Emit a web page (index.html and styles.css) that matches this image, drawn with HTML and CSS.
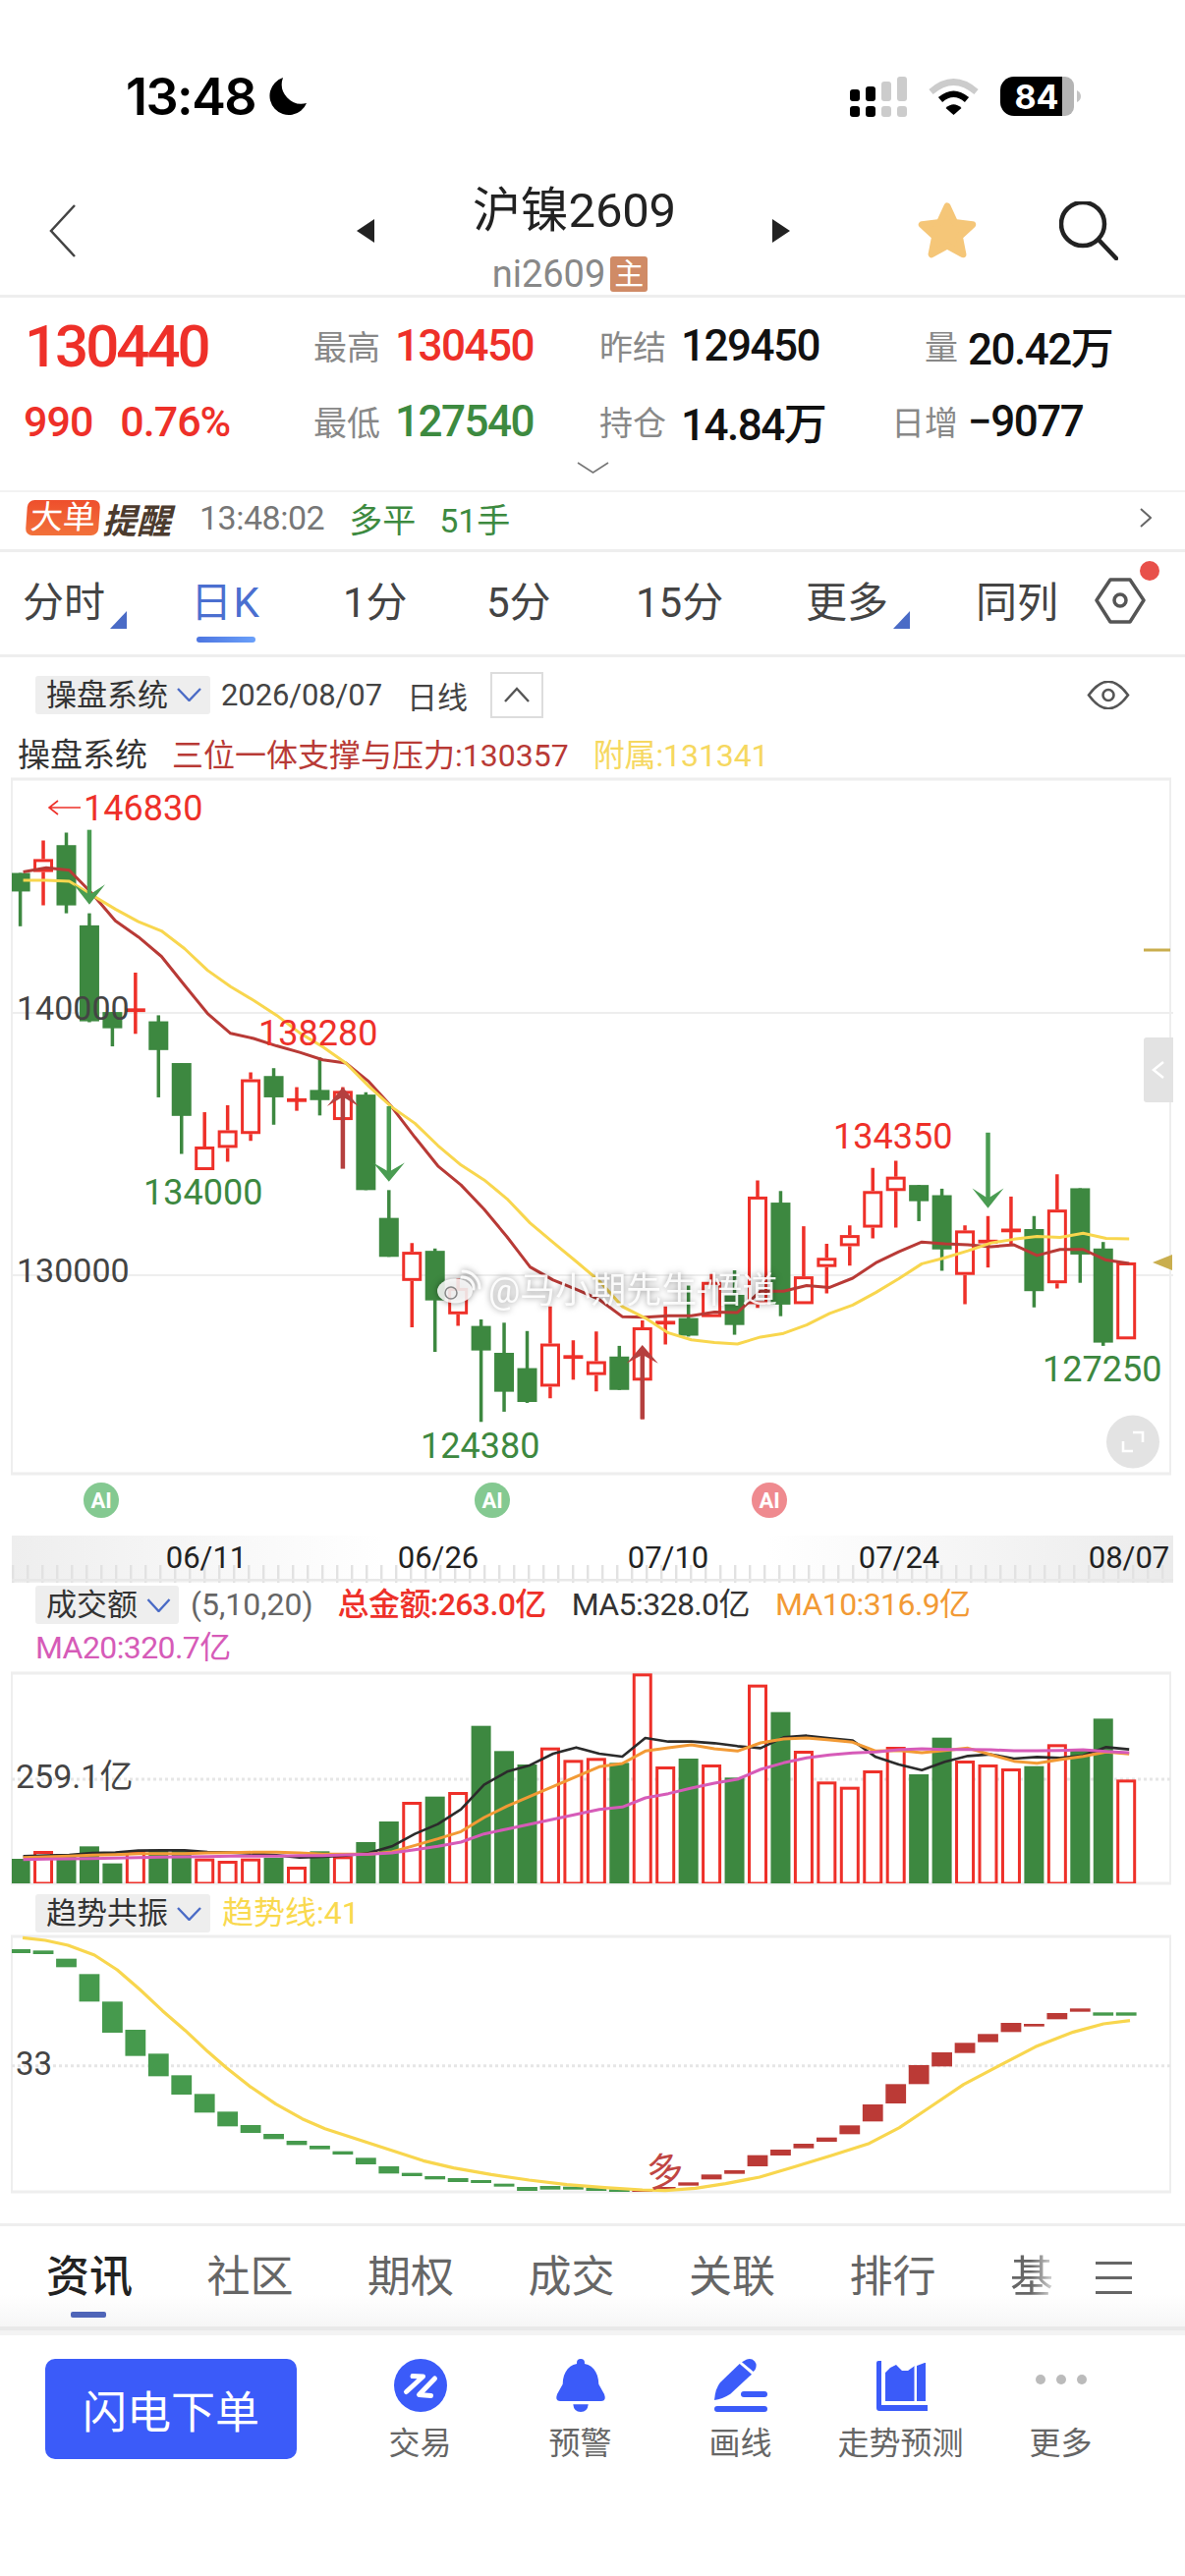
FILE: index.html
```html
<!DOCTYPE html>
<html lang="zh-CN">
<head>
  <meta charset="UTF-8" />
  <meta name="viewport" content="width=device-width, initial-scale=1.0" />
  <title>沪镍2609</title>
  <link rel="stylesheet" href="styles.css">
</head>
<body>
  <div class="status">
    <span class="clock">13:48</span>
    <svg class="moon" viewBox="0 0 40 40"><path d="M15 1A19.5 19.5 0 1 0 39 27 20 20 0 0 1 15 1Z"/></svg>
    <div class="status-right">
      <svg width="58" height="41" viewBox="0 0 58 41">
        <g fill="#000">
          <rect x="0" y="13" width="10" height="12" rx="3"/><rect x="0" y="30" width="10" height="11" rx="3"/>
          <rect x="16" y="10" width="10" height="15" rx="3"/><rect x="16" y="30" width="10" height="11" rx="3"/>
        </g>
        <g fill="#ccc">
          <rect x="32" y="5" width="10" height="20" rx="3"/><rect x="32" y="30" width="10" height="11" rx="3"/>
          <rect x="48" y="0" width="10" height="25" rx="3"/><rect x="48" y="30" width="10" height="11" rx="3"/>
        </g>
      </svg>
      <svg width="51" height="37" viewBox="0 0 51 37">
        <path d="M2.5 13.5Q25.5 -6.5 48.5 13.5" fill="none" stroke="#ccc" stroke-width="6.5"/>
        <path d="M12 21.5Q25.5 10 39 21.5" fill="none" stroke="#000" stroke-width="6.5"/>
        <path d="M17.5 30Q25.5 22.5 33.5 30L25.5 37Z" fill="#000"/>
      </svg>
      <svg width="82" height="40" viewBox="0 0 82 40">
        <path d="M14 0H63V40H14A14 14 0 0 1 0 26V14A14 14 0 0 1 14 0Z" fill="#000"/>
        <path d="M63 0H66A9 9 0 0 1 75 9V31A9 9 0 0 1 66 40H63Z" fill="#b4b4b4"/>
        <path d="M78 14Q82 16 82 20T78 26Z" fill="#c4c4c4"/>
        <text x="37" y="33" text-anchor="middle" class="battery-num">84</text>
      </svg>
    </div>
  </div>

  <div class="nav">
    <svg class="back" width="27" height="54" viewBox="0 0 27 54"><path d="M26 1L2 27 26 53" fill="none" stroke="#444" stroke-width="2.5"/></svg>
    <div class="tri tri-left"></div>
    <div class="title-box">
      <div class="title">沪镍2609</div>
      <div class="sub"><span>ni2609</span><span class="main-tag">主</span></div>
    </div>
    <div class="tri tri-right"></div>
    <svg class="star" width="60" height="60" viewBox="0 0 60 60"><path d="M30 5L37.6 21.5 55.7 23.7 42.4 36 45.9 53.8 30 45 14.1 53.8 17.6 36 4.3 23.7 22.4 21.5Z" fill="#f5c678" stroke="#f5c678" stroke-width="7" stroke-linejoin="round"/></svg>
    <svg class="search" width="60" height="60" viewBox="0 0 60 60"><circle cx="24" cy="23" r="22" fill="none" stroke="#222" stroke-width="4.5"/><path d="M41 40L58 58" stroke="#222" stroke-width="4.5" stroke-linecap="round"/></svg>
  </div>

  <div class="quote">
    <div class="price red">130440</div>
    <div class="label">最高</div><div class="val red">130450</div>
    <div class="label">昨结</div><div class="val">129450</div>
    <div class="label right">量</div><div class="val">20.42万</div>
    <div class="change red"><span>990</span><span>0.76%</span></div>
    <div class="label">最低</div><div class="val green">127540</div>
    <div class="label">持仓</div><div class="val">14.84万</div>
    <div class="label right">日增</div><div class="val">−9077</div>
    <svg class="more-down" width="33" height="12" viewBox="0 0 33 12"><path d="M1 1L16.5 11 32 1" fill="none" stroke="#777" stroke-width="1.6"/></svg>
  </div>

  <div class="alert">
    <span class="badge">大单</span><span class="badge-word">提醒</span>
    <span class="alert-time">13:48:02</span>
    <span class="green">多平</span>
    <span class="green alert-lots">51手</span>
    <svg class="alert-go" width="12" height="20" viewBox="0 0 12 20"><path d="M1 1L11 10 1 19" fill="none" stroke="#666" stroke-width="2"/></svg>
  </div>

  <div class="periods">
    <div class="period has-more">分时</div>
    <div class="period active">日K</div>
    <div class="period">1分</div>
    <div class="period">5分</div>
    <div class="period">15分</div>
    <div class="period has-more">更多</div>
    <div class="period">同列</div>
    <svg class="hex" width="68" height="65" viewBox="0 0 68 65">
      <path d="M2 40L16 19H36L50 40 36 62H16Z" fill="none" stroke="#555" stroke-width="3.5" stroke-linejoin="round"/>
      <circle cx="26" cy="40" r="6" fill="none" stroke="#555" stroke-width="3.5"/>
      <circle cx="56" cy="10" r="10" fill="#e8504a"/>
    </svg>
  </div>

  <div class="toolbar">
    <div class="select"><span>操盘系统</span><svg width="27" height="14" viewBox="0 0 27 14"><path d="M2 1L13.5 13 25 1" fill="none" stroke="#4a6bc6" stroke-width="2.4"/></svg></div>
    <span class="tool-date">2026/08/07</span>
    <span class="tool-line">日线</span>
    <div class="collapse"><svg width="28" height="16" viewBox="0 0 28 16"><path d="M2 15L14 2 26 15" fill="none" stroke="#555" stroke-width="2.4"/></svg></div>
    <svg class="eye" width="44" height="29" viewBox="0 0 44 29"><path d="M2 14.5Q22 -13 42 14.5 22 42 2 14.5Z" fill="none" stroke="#555" stroke-width="2.6"/><circle cx="22" cy="14.5" r="5.5" fill="none" stroke="#555" stroke-width="2.6"/></svg>
  </div>

  <div class="indicator">
    <span class="ind-name">操盘系统</span>
    <span class="ind-line">三位一体支撑与压力:130357</span>
    <span class="ind-sub">附属:131341</span>
  </div>

  <svg id="mainChart" class="chart" width="1206" height="822" viewBox="0 790 1206 822"></svg>

  <div class="vol-head">
    <div class="select"><span>成交额</span><svg width="25" height="14" viewBox="0 0 25 14"><path d="M1.5 1L12.5 13 23.5 1" fill="none" stroke="#4a6bc6" stroke-width="2.4"/></svg></div>
    <span class="vol-args">(5,10,20)</span>
    <span class="vol-total">总金额:263.0亿</span>
    <span class="vol-ma5">MA5:328.0亿</span>
    <span class="vol-ma10">MA10:316.9亿</span>
    <span class="vol-ma20">MA20:320.7亿</span>
  </div>

  <svg id="volChart" class="chart" width="1206" height="218" viewBox="0 1702 1206 218"></svg>

  <div class="trend-head">
    <div class="select"><span>趋势共振</span><svg width="27" height="14" viewBox="0 0 27 14"><path d="M2 1L13.5 13 25 1" fill="none" stroke="#4a6bc6" stroke-width="2.4"/></svg></div>
    <span class="trend-val">趋势线:41</span>
  </div>

  <svg id="trendChart" class="chart" width="1206" height="264" viewBox="0 1970 1206 264"></svg>

  <div class="tabs">
    <div class="tab active">资讯</div>
    <div class="tab">社区</div>
    <div class="tab">期权</div>
    <div class="tab">成交</div>
    <div class="tab">关联</div>
    <div class="tab">排行</div>
    <div class="tab fade">基</div>
    <div class="tab-menu"><i></i><i></i><i></i></div>
  </div>

  <div class="actions">
    <button class="order">闪电下单</button>
    <div class="action">
      <svg width="54" height="54" viewBox="0 0 54 54"><circle cx="27" cy="27" r="27" fill="#3b5bf9"/><path d="M19 17.5L29.5 18 12.5 33.5M41.5 20L25.5 36.5 37.5 37.5" fill="none" stroke="#fff" stroke-width="5" stroke-linecap="round" stroke-linejoin="round"/></svg>
      <span>交易</span>
    </div>
    <div class="action">
      <svg width="54" height="54" viewBox="0 0 54 54"><circle cx="27" cy="4" r="4" fill="#3b5bf9"/><path d="M8.7 25.7C8.7 13 16 4.5 27 4.5S45.3 13 45.3 25.7L51 36Q53.5 43 48 43H6Q.5 43 3 36Z" fill="#3b5bf9"/><path d="M19.3 46.3H34.7Q34 54 27 54T19.3 46.3Z" fill="#3b5bf9"/></svg>
      <span>预警</span>
    </div>
    <div class="action">
      <svg width="54" height="54" viewBox="0 0 54 54"><path d="M25.7 5L38 15.7 16.3 35.7Q8 41 0 42 1 30 6 24Z" fill="#3b5bf9"/><path d="M28 3.3L33 .5Q38 -1 41 2.5T41.5 11L39.7 13Z" fill="#3b5bf9"/><rect x="27" y="33" width="27" height="6" rx="3" fill="#3b5bf9"/><rect x="0" y="48" width="54" height="6" rx="3" fill="#3b5bf9"/></svg>
      <span>画线</span>
    </div>
    <div class="action">
      <svg width="54" height="54" viewBox="0 0 54 54"><path d="M2 4Q2 2 4 2H7V47H53Q56 47 56 49V50Q56 53 53 53H5Q2 53 2 50Z" fill="#3b5bf9"/><path d="M11 14L16 9 22 6 28 12 34 12 41 7V43H11Z" fill="#3b5bf9"/><path d="M43 7L51 4H52V43H43Z" fill="#3b5bf9"/><path d="M41.5 6V43" stroke="#fff" stroke-width="2"/></svg>
      <span>走势预测</span>
    </div>
    <div class="action">
      <svg width="54" height="54" viewBox="0 0 54 54"><circle cx="6" cy="21" r="5" fill="#bbb"/><circle cx="27" cy="21" r="5" fill="#bbb"/><circle cx="48" cy="21" r="5" fill="#bbb"/></svg>
      <span>更多</span>
    </div>
  </div>

  <script src="chart.js"></script>
</body>
</html>
```

FILE: styles.css
```css
* {
  box-sizing: border-box;
  margin: 0;
  padding: 0;
}

body {
  width: 1206px;
  font-family: Roboto, "Noto Sans CJK SC", sans-serif;
  background: #fff;
  color: #222;
  overflow-x: hidden;
}

.red { color: #ee3029; }
.green { color: #3d8a40; }

/* status bar */
.status {
  height: 170px;
  padding: 26px 106px 0 128px;
  display: flex;
  align-items: center;
}

.clock {
  font-family: Inter, sans-serif;
  font-size: 52px;
  font-weight: 600;
  letter-spacing: -1.5px;
  color: #000;
}

.moon {
  width: 40px;
  height: 40px;
  margin-left: 13px;
  fill: #000;
}

.status-right {
  margin-left: auto;
  display: flex;
  align-items: center;
  gap: 22px;
}

.battery-num {
  font-family: Inter, sans-serif;
  font-size: 34px;
  font-weight: 700;
  fill: #fff;
}

/* title bar */
.nav {
  height: 133px;
  padding-left: 50px;
  display: flex;
  align-items: center;
  border-bottom: 3px solid #eee;
}

.tri {
  width: 18px;
  height: 24px;
  background: #222;
}

.tri-left {
  margin-left: 286px;
  clip-path: polygon(100% 0, 100% 100%, 0 50%);
}

.tri-right {
  margin-left: 101px;
  clip-path: polygon(0 0, 100% 50%, 0 100%);
}

.title-box {
  margin-left: 100px;
  width: 204px;
  align-self: flex-start;
  padding-top: 17px;
  text-align: center;
}

.title {
  font-size: 49px;
  line-height: 56px;
  white-space: nowrap;
  letter-spacing: -0.2px;
  color: #222;
}

.sub {
  margin-top: 17px;
  height: 38px;
  padding-right: 6px;
  display: flex;
  justify-content: center;
  align-items: center;
  gap: 5px;
  font-size: 38px;
  color: #888;
}

.main-tag {
  width: 38px;
  height: 36px;
  line-height: 36px;
  background: #d08b66;
  color: #fff;
  font-size: 30px;
  border-radius: 3px;
}

.star { margin-left: 130px; }
.search { margin-left: 84px; }

/* quote block */
.quote {
  position: relative;
  height: 198px;
  display: grid;
  grid-template-columns: 319px 83px 208px 83px 214px 78px 1fr;
  grid-template-rows: 77px 77px;
  padding-top: 10px;
  align-items: center;
  border-bottom: 2px solid #f2f2f2;
}

.price {
  padding-left: 25px;
  font-size: 60px;
  font-weight: 500;
  letter-spacing: -3px;
  line-height: 60px;
  margin-top: 2px;
}

.change {
  padding-left: 24px;
  display: flex;
  gap: 28px;
  font-size: 43px;
  font-weight: 500;
  letter-spacing: -1px;
}

.label {
  font-size: 34px;
  color: #888;
}

.label.right {
  text-align: right;
  padding-right: 10px;
}

.val {
  font-size: 44px;
  font-weight: 500;
  letter-spacing: -1.5px;
  white-space: nowrap;
  color: #111;
}

.val.red { color: #ee3029; }
.val.green { color: #3d8a40; }

.more-down {
  position: absolute;
  left: 587px;
  top: 167px;
}

/* big order alert */
.alert {
  height: 61px;
  padding: 0 34px 6px 27px;
  display: flex;
  align-items: center;
  font-size: 34px;
  border-bottom: 3px solid #eee;
}

.badge {
  width: 74px;
  height: 36px;
  line-height: 36px;
  text-align: center;
  font-size: 33px;
  color: #fff;
  background: linear-gradient(#ee4f2c, #f2713a);
  border-radius: 7px;
  transform: skewX(-4deg);
}

.badge-word {
  margin-left: 3px;
  font-size: 35px;
  font-weight: 700;
  font-style: italic;
  color: #4c3b2e;
}

.alert-time {
  margin-left: 29px;
  margin-right: 25px;
  color: #777;
  letter-spacing: -0.5px;
}

.alert-lots { margin-left: 24px; }
.alert-go { margin-left: auto; }

/* period tabs */
.periods {
  height: 107px;
  padding-left: 23px;
  display: grid;
  grid-template-columns: 171px 155px 146px 152px 173px 173px 121px 68px;
  align-items: center;
  border-bottom: 3px solid #eee;
}

.period {
  position: relative;
  height: 50px;
  line-height: 50px;
  font-size: 42px;
  color: #444;
  white-space: nowrap;
}

.period.active {
  color: #4b6fd0;
  letter-spacing: 1.5px;
}

.period.active::after {
  content: "";
  position: absolute;
  left: 6px;
  top: 59px;
  width: 60px;
  height: 6px;
  border-radius: 3px;
  background: linear-gradient(90deg, #4d75e0, #6aa0fa);
}

.period.has-more::after {
  content: "";
  position: absolute;
  left: 89px;
  top: 33px;
  width: 17px;
  height: 18px;
  background: #4a6bc6;
  clip-path: polygon(100% 0, 100% 100%, 0 100%);
}

.hex { margin-top: -22px; }

/* indicator selector */
.toolbar {
  height: 76px;
  padding: 0 56px 0 36px;
  display: flex;
  align-items: center;
  font-size: 31px;
  color: #444;
}

.select {
  height: 39px;
  padding: 0 8px 0 11px;
  display: inline-flex;
  align-items: center;
  gap: 8px;
  font-size: 31px;
  line-height: 39px;
  color: #333;
  background: #eee;
  border-radius: 3px;
}

.tool-date {
  margin-left: 11px;
  letter-spacing: -0.1px;
}

.tool-line { margin-left: 25px; }

.collapse {
  margin-left: 23px;
  width: 54px;
  height: 47px;
  display: flex;
  align-items: center;
  justify-content: center;
  border: 2px solid #ddd;
}

.eye { margin-left: auto; }

.indicator {
  height: 45px;
  padding: 0 0 4px 18px;
  display: flex;
  align-items: center;
  font-size: 32px;
  white-space: nowrap;
}

.ind-name {
  font-size: 33px;
  color: #333;
}

.ind-line {
  margin-left: 25px;
  color: #b83a36;
}

.ind-sub {
  margin-left: 25px;
  letter-spacing: -0.1px;
  color: #f6d860;
}

/* charts */
.chart {
  display: block;
  overflow: visible;
}

.chart text {
  font-family: Roboto, "Noto Sans CJK SC", sans-serif;
}

.tag-text { font-size: 36px; }

.axis-label {
  font-size: 34px;
  letter-spacing: 0;
}

.axis-text {
  font-size: 31px;
  fill: #222;
}

.ai-text {
  font-size: 22px;
  font-weight: 700;
  fill: #fff;
}

.watermark {
  font-size: 36px;
  fill: rgba(255, 255, 255, 0.9);
}

.wm-shadow {
  filter: drop-shadow(0 0 3px rgba(0, 0, 0, 0.5));
}

.vol-head {
  height: 90px;
  padding: 2px 0 0 36px;
  display: flex;
  flex-wrap: wrap;
  align-items: center;
  align-content: flex-start;
  font-size: 32px;
  line-height: 39px;
  letter-spacing: -0.6px;
  white-space: nowrap;
}

.vol-head .select {
  gap: 9px;
  letter-spacing: 0;
}

.vol-args {
  margin-left: 12px;
  letter-spacing: 0;
  color: #666;
}

.vol-total {
  margin-left: 25px;
  font-weight: 500;
  color: #ee3029;
}

.vol-ma5 { margin-left: 26px; color: #333; }
.vol-ma10 { margin-left: 26px; color: #f29a35; }

.vol-ma20 {
  width: 100%;
  margin-top: 5px;
  color: #d65bb8;
}

.trend-head {
  height: 50px;
  padding: 8px 0 3px 36px;
  display: flex;
  align-items: center;
  font-size: 32px;
  line-height: 39px;
}

.trend-val {
  margin-left: 12px;
  color: #f9d94f;
}

/* bottom tabs */
.tabs {
  margin-top: 29px;
  height: 109px;
  padding: 27px 54px 0 47px;
  display: flex;
  gap: 77.5px;
  align-items: flex-start;
  border-top: 3px solid #eee;
  border-bottom: 4px solid #e9e9e9;
  background: linear-gradient(#fff 68%, #f6f6f6);
}

.tab {
  position: relative;
  width: 86px;
  height: 50px;
  line-height: 50px;
  font-size: 44px;
  color: #666;
  white-space: nowrap;
}

.tab.active {
  font-weight: 500;
  color: #222;
}

.tab.active::after {
  content: "";
  position: absolute;
  left: 25px;
  top: 60px;
  width: 36px;
  height: 6px;
  border-radius: 2px;
  background: #4f65b8;
}

.tab.fade {
  width: 53px;
  -webkit-mask-image: linear-gradient(90deg, #000 40%, transparent);
  mask-image: linear-gradient(90deg, #000 40%, transparent);
}

.tab-menu {
  width: 37px;
  padding-top: 9px;
  margin-left: -42.5px;
}

.tab-menu i {
  display: block;
  height: 3px;
  background: #666;
  margin-bottom: 12px;
}

/* bottom actions */
.actions {
  padding: 24px 0 0 46px;
  display: flex;
  align-items: flex-start;
  border-top: 5px solid #f3f3f3;
}

.order {
  width: 256px;
  height: 102px;
  margin-right: 44px;
  border: none;
  border-radius: 10px;
  background: #3b5bf9;
  color: #fff;
  font-family: Roboto, "Noto Sans CJK SC", sans-serif;
  font-size: 45px;
}

.action {
  width: 163px;
  display: flex;
  flex-direction: column;
  align-items: center;
  gap: 6px;
  font-size: 32px;
  color: #666;
}
```

FILE: chart.js
```js
// Candle, line and bar values below were measured off a scaled trace of the
// chart, so each chart has its own helper back to page pixels.
const NS = 'http://www.w3.org/2000/svg';
const RED = '#ee3029';
const GREEN = '#3d8840';

const barX = i => 20.6 + i * 23.45;
const priceY = v => 780 + v / 2.119;
const volY = v => 1520 + v / 3;
const trendY = v => 1920 + v / 3;

function add(svg, tag, attrs, text) {
  const el = document.createElementNS(NS, tag);
  for (const k in attrs) el.setAttribute(k, attrs[k]);
  if (text) el.textContent = text;
  svg.appendChild(el);
  return el;
}

function frame(svg, top, bottom) {
  add(svg, 'path', { d: `M12 ${top}V${bottom}M1191 ${top}V${bottom}`, stroke: '#eee', 'stroke-width': 2 });
  add(svg, 'path', { d: `M11 ${top}H1192M11 ${bottom}H1192`, stroke: '#eee', 'stroke-width': 3 });
}

function clip(svg, id, top, bottom) {
  const defs = add(svg, 'defs', {});
  const c = add(defs, 'clipPath', { id });
  add(c, 'rect', { x: 12, y: top, width: 1179, height: bottom - top });
  return add(svg, 'g', { 'clip-path': `url(#${id})` });
}

function line(svg, values, toY, color, width) {
  const pts = values.map((v, i) => `${barX(i) + 3},${toY(v)}`).join(' ');
  add(svg, 'polyline', { points: pts, fill: 'none', stroke: color, 'stroke-width': width, 'stroke-linejoin': 'round' });
}

function drawMain() {
  const svg = document.getElementById('mainChart');
  frame(svg, 793, 1500);
  add(svg, 'path', { d: 'M12 1031H1194M12 1298H1194', stroke: '#eee', 'stroke-width': 2 });

  // [up?, high, body top, body bottom, low]
  const candles = [
    [0, 230, 230, 270, 345], [1, 160, 200, 228, 300], [0, 143, 170, 300, 317], [0, 317, 343, 550, 552],
    [0, 530, 530, 565, 604], [1, 445, 522, 530, 577], [0, 537, 550, 612, 714], [0, 640, 640, 754, 836],
    [1, 746, 820, 871, 871], [1, 731, 785, 823, 853], [1, 660, 675, 793, 808], [0, 651, 668, 714, 773],
    [1, 692, 716, 724, 743], [0, 628, 698, 720, 753], [1, 692, 700, 763, 763], [0, 703, 708, 914, 914],
    [0, 914, 974, 1058, 1058], [1, 1028, 1047, 1110, 1210], [0, 1040, 1045, 1152, 1263], [1, 1105, 1125, 1182, 1207],
    [0, 1193, 1207, 1260, 1414], [0, 1200, 1265, 1349, 1392], [0, 1218, 1298, 1371, 1373], [1, 1165, 1245, 1338, 1363],
    [1, 1238, 1270, 1278, 1323], [1, 1219, 1283, 1313, 1348], [0, 1250, 1273, 1345, 1345], [1, 1195, 1210, 1325, 1408],
    [1, 1165, 1196, 1204, 1247], [0, 1120, 1190, 1228, 1230], [1, 1095, 1112, 1188, 1188], [0, 1087, 1140, 1205, 1226],
    [1, 893, 928, 1160, 1168], [0, 916, 941, 1161, 1186], [1, 992, 1100, 1160, 1160], [1, 1030, 1060, 1080, 1137],
    [1, 990, 1011, 1035, 1077], [1, 866, 916, 995, 1018], [1, 851, 885, 916, 995], [0, 903, 903, 938, 981],
    [0, 911, 925, 1042, 1088], [1, 990, 1001, 1097, 1160], [1, 970, 1021, 1029, 1081], [1, 928, 997, 1005, 1030],
    [0, 970, 998, 1132, 1167], [1, 880, 956, 1115, 1126], [0, 910, 910, 1053, 1114], [0, 1026, 1040, 1243, 1250],
    [1, 1070, 1070, 1236, 1236],
  ];
  const red = [228, 219, 224, 275, 333, 368, 410, 472, 533, 576, 587, 603, 617, 633, 640, 680, 735, 800, 862, 903, 955, 1015, 1080, 1108, 1128, 1150, 1187, 1188, 1185, 1185, 1177, 1178, 1132, 1132, 1120, 1124, 1104, 1071, 1047, 1026, 1030, 1032, 1036, 1032, 1055, 1042, 1042, 1065, 1072];
  const yellow = [246, 246, 248, 278, 308, 335, 355, 393, 440, 475, 505, 537, 575, 605, 640, 690, 735, 770, 818, 860, 892, 933, 985, 1027, 1068, 1110, 1165, 1190, 1222, 1237, 1243, 1246, 1231, 1223, 1205, 1180, 1162, 1135, 1105, 1073, 1060, 1045, 1028, 1020, 1014, 1016, 1007, 1018, 1019];

  const g = clip(svg, 'mainClip', 793, 1500);
  candles.forEach((c, i) => {
    const x = barX(i);
    const [up, hi, top, bot, lo] = c.map((v, n) => (n ? priceY(v) : v));
    const color = up ? RED : GREEN;
    if (!up || bot - top < 6) {
      add(g, 'path', { d: `M${x} ${hi}V${lo}`, stroke: color, 'stroke-width': 3.5 });
      add(g, 'rect', { x: x - 10, y: top, width: 20, height: bot - top, fill: color });
    } else {
      add(g, 'path', { d: `M${x} ${hi}V${top}M${x} ${bot}V${lo}`, stroke: color, 'stroke-width': 3.5 });
      add(g, 'rect', { x: x - 8.5, y: top + 1.5, width: 17, height: bot - top - 3, fill: '#fff', stroke: color, 'stroke-width': 3 });
    }
  });
  line(g, red, priceY, '#b83a36', 3);
  line(g, yellow, priceY, '#f8d64e', 3);

  // buy and sell arrows
  const downs = [[3, 137, 298, 255], [16, 733, 896, 855], [42, 790, 953, 910]];
  downs.forEach(([i, from, tip, wing]) => {
    const x = barX(i);
    const t = priceY(tip), w = priceY(wing);
    add(svg, 'path', { d: `M${x} ${priceY(from)}V${t - 6}`, stroke: '#4a9c52', 'stroke-width': 4.5 });
    add(svg, 'path', { d: `M${x} ${t}L${x - 16} ${w}L${x} ${t - 10}L${x + 16} ${w}Z`, fill: '#4a9c52' });
  });
  const ups = [[14, 868, 692, 733], [27, 1408, 1248, 1288]];
  ups.forEach(([i, from, tip, wing]) => {
    const x = barX(i);
    const t = priceY(tip), w = priceY(wing);
    add(svg, 'path', { d: `M${x} ${priceY(from)}V${t + 6}`, stroke: '#b5403f', 'stroke-width': 4.5 });
    add(svg, 'path', { d: `M${x} ${t}L${x - 16} ${w}L${x} ${t + 10}L${x + 16} ${w}Z`, fill: '#b5403f' });
  });

  // price labels
  const labels = [
    ['146830', 85, 835, RED], ['138280', 263, 1064, RED], ['134000', 146, 1226, GREEN],
    ['124380', 428, 1484, GREEN], ['134350', 848, 1169, RED], ['127250', 1061, 1406, GREEN],
  ];
  labels.forEach(([t, x, y, color]) => add(svg, 'text', { x, y, fill: color, class: 'tag-text' }, t));
  add(svg, 'text', { x: 17, y: 1038, fill: '#444', class: 'axis-label' }, '140000');
  add(svg, 'text', { x: 17, y: 1305, fill: '#444', class: 'axis-label' }, '130000');
  add(svg, 'path', { d: 'M82 822H50M59 815L50 822 59 829', fill: 'none', stroke: RED, 'stroke-width': 1.6 });

  // side markers
  add(svg, 'rect', { x: 1164, y: 965.5, width: 27, height: 3, fill: '#c9ae4e' });
  add(svg, 'path', { d: 'M1173 1285L1193 1277V1293Z', fill: '#c9ae4e' });
  add(svg, 'path', { d: 'M1194 1056H1167Q1164 1056 1164 1059V1119Q1164 1122 1167 1122H1194Z', fill: '#e3e3e3' });
  add(svg, 'path', { d: 'M1184 1081L1174 1089 1184 1097', fill: 'none', stroke: '#fff', 'stroke-width': 2.5 });
  add(svg, 'ellipse', { cx: 1153, cy: 1467.5, rx: 27, ry: 27, fill: '#e3e3e3' });
  add(svg, 'path', { d: 'M1143 1467V1477H1153M1163 1468V1458H1153', fill: 'none', stroke: '#fff', 'stroke-width': 2.6 });

  // weibo watermark
  const wm = add(svg, 'g', { class: 'wm-shadow' });
  add(wm, 'ellipse', { cx: 463, cy: 1314, rx: 18, ry: 12.5, fill: 'rgba(255,255,255,.85)' });
  add(wm, 'circle', { cx: 459, cy: 1316, r: 6, fill: 'none', stroke: '#888', 'stroke-width': 1.5 });
  add(wm, 'path', { d: 'M470 1300A11 11 0 0 1 482 1312M471 1294A17 17 0 0 1 488 1311', fill: 'none', stroke: 'rgba(255,255,255,.9)', 'stroke-width': 3, 'stroke-linecap': 'round' });
  add(wm, 'text', { x: 497, y: 1326, class: 'watermark' }, '@马小期先生-悟道');

  // AI marks
  [[103, '#84c991'], [501, '#84c991'], [783, '#ef8a8f']].forEach(([x, color]) => {
    add(svg, 'circle', { cx: x, cy: 1527, r: 18, fill: color });
    add(svg, 'text', { x, y: 1535, 'text-anchor': 'middle', class: 'ai-text' }, 'AI');
  });

  // date axis
  const defs = add(svg, 'defs', {});
  const grad = add(defs, 'linearGradient', { id: 'axisFill' });
  [[0, '#eee'], [0.32, '#fff'], [0.65, '#fff'], [1, '#ebebeb']].forEach(([o, c]) =>
    add(grad, 'stop', { offset: o, 'stop-color': c }));
  add(svg, 'rect', { x: 12, y: 1563, width: 1182, height: 48, fill: 'url(#axisFill)' });
  for (let x = 12; x < 1194; x += 15) {
    add(svg, 'rect', { x, y: 1593, width: 2.4, height: 18, fill: '#e2e2e2' });
  }
  add(svg, 'rect', { x: 12, y: 1607, width: 1182, height: 2.5, fill: '#e8e8e8' });
  [['06/11', 210], ['06/26', 446], ['07/10', 680], ['07/24', 915], ['08/07', 1149]].forEach(([t, x]) =>
    add(svg, 'text', { x, y: 1596, 'text-anchor': 'middle', class: 'axis-text' }, t));
}

function drawVolume() {
  const svg = document.getElementById('volChart');
  frame(svg, 1703, 1917);
  add(svg, 'path', { d: 'M12 1811H1191', stroke: '#e6e6e6', 'stroke-width': 3, 'stroke-dasharray': '3 3' });

  const tops = [1116, 1092, 1105, 1078, 1130, 1092, 1088, 1090, 1115, 1122, 1115, 1113, 1140, 1093, 1108, 1065, 1002, 942, 926, 912, 710, 787, 828, 776, 814, 808, 823, 550, 834, 810, 828, 868, 584, 668, 786, 880, 896, 846, 774, 858, 746, 816, 828, 840, 833, 766, 785, 688, 874];
  const ups = [0, 1, 0, 0, 0, 1, 0, 0, 1, 1, 1, 0, 1, 0, 1, 0, 0, 1, 0, 1, 0, 0, 0, 1, 1, 1, 0, 1, 1, 0, 1, 0, 1, 0, 1, 1, 1, 1, 1, 0, 0, 1, 1, 1, 0, 1, 0, 0, 1];
  const ma5 = [1108, 1106, 1104, 1098, 1097, 1091, 1090, 1090, 1095, 1097, 1100, 1105, 1112, 1110, 1106, 1098, 1078, 1040, 1010, 965, 890, 850, 830, 795, 776, 795, 804, 747, 758, 758, 763, 772, 778, 745, 740, 748, 755, 805, 828, 845, 820, 802, 797, 810, 805, 808, 800, 775, 782];
  const ma10 = [1112, 1110, 1108, 1105, 1103, 1100, 1100, 1100, 1098, 1097, 1096, 1096, 1098, 1102, 1102, 1102, 1095, 1075, 1055, 1033, 990, 955, 925, 895, 865, 835, 825, 787, 777, 768, 780, 787, 762, 750, 747, 753, 760, 787, 785, 792, 785, 778, 798, 818, 824, 813, 803, 790, 796];
  const ma20 = [1118, 1117, 1116, 1115, 1114, 1112, 1111, 1110, 1109, 1108, 1108, 1108, 1106, 1106, 1104, 1102, 1098, 1088, 1078, 1065, 1040, 1025, 1010, 995, 980, 965, 958, 930, 917, 900, 885, 873, 843, 823, 808, 799, 793, 790, 783, 780, 782, 782, 783, 786, 786, 785, 783, 788, 792];

  const g = clip(svg, 'volClip', 1703, 1917);
  const bottom = volY(1191);
  tops.forEach((v, i) => {
    const x = barX(i), y = volY(v);
    if (ups[i]) {
      add(g, 'rect', { x: x - 8.5, y: y + 1.5, width: 17, height: bottom - y - 1.5, fill: '#fff', stroke: RED, 'stroke-width': 3 });
    } else {
      add(g, 'rect', { x: x - 10, y, width: 20, height: bottom - y, fill: GREEN });
    }
  });
  line(g, ma5, volY, '#2b2b2b', 2.6);
  line(g, ma10, volY, '#f29a35', 3);
  line(g, ma20, volY, '#d65bb8', 3);
  add(svg, 'text', { x: 16, y: 1820, 'font-size': 34, fill: '#444' }, '259.1亿');
}

function drawTrend() {
  const svg = document.getElementById('trendChart');
  frame(svg, 1971, 2231);
  add(svg, 'path', { d: 'M12 2102.7H1191', stroke: '#e6e6e6', 'stroke-width': 3, 'stroke-dasharray': '3 3' });

  // [body top, body bottom]; green until index 26, then red, last two green
  const bars = [[192, 204], [196, 207], [221, 247], [268, 352], [352, 447], [438, 518], [511, 580], [577, 636], [634, 691], [688, 733], [729, 753], [756, 772], [777, 790], [792, 803], [809, 819], [829, 849], [855, 877], [875, 885], [885, 895], [891, 903], [897, 906], [908, 917], [918, 930], [915, 926], [917, 926], [920, 930], [925, 935], [928, 935], [918, 925], [904, 914], [880, 895], [867, 878], [821, 855], [804, 822], [786, 800], [767, 780], [730, 757], [666, 718], [604, 663], [546, 604], [507, 550], [478, 509], [451, 476], [417, 445], [420, 428], [387, 406], [373, 383], [385, 395], [385, 395]];
  const g = clip(svg, 'trendClip', 1971, 2231);
  bars.forEach(([t, b], i) => {
    const color = i > 26 && i < 47 ? '#bb3a36' : '#469a4d';
    add(g, 'rect', { x: barX(i) - 10.4, y: trendY(t), width: 20.8, height: (b - t) / 3, fill: color });
  });

  const curve = [[30, 157], [60, 165], [90, 180], [125, 210], [155, 255], [185, 315], [215, 380], [245, 440], [275, 505], [300, 555], [330, 610], [365, 665], [400, 710], [430, 740], [470, 770], [510, 800], [560, 838], [600, 860], [650, 880], [700, 897], [750, 911], [800, 920], [850, 927], [880, 929], [920, 922], [960, 908], [1005, 888], [1050, 857], [1100, 822], [1150, 785], [1190, 737], [1230, 675], [1275, 605], [1320, 550], [1370, 490], [1420, 445], [1460, 420], [1495, 410]];
  add(svg, 'polyline', { points: curve.map(([x, y]) => `${x / 1.3},${trendY(y)}`).join(' '), fill: 'none', stroke: '#f8d64e', 'stroke-width': 3.2, 'stroke-linejoin': 'round' });

  add(svg, 'text', { x: 658, y: 2223, 'font-size': 38, fill: '#c04643', transform: 'rotate(-12 677 2210)' }, '多');
  add(svg, 'text', { x: 16, y: 2112, 'font-size': 33, fill: '#444' }, '33');
}

drawMain();
drawVolume();
drawTrend();
```
